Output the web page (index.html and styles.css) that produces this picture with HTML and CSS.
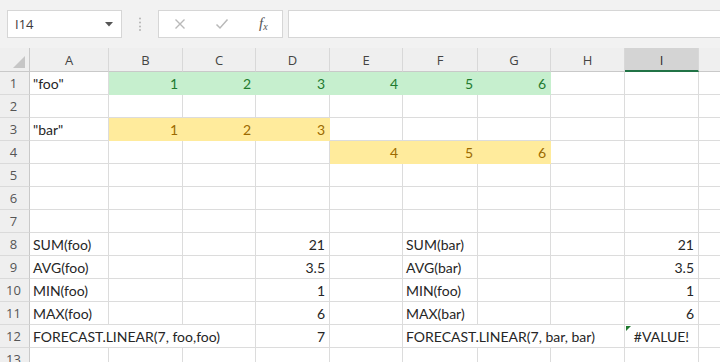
FILE: index.html
```html
<!DOCTYPE html>
<html>
<head>
<meta charset="utf-8">
<link rel="stylesheet" href="styles.css">
</head>
<body>
<div class="app">
  <div class="toolbar">
    <div class="namebox">
      <span class="nb-text">I14</span>
      <svg class="nb-arrow" width="8" height="5" viewBox="0 0 8 5"><polygon points="0,0 8,0 4,4.5" fill="#555"/></svg>
    </div>
    <div class="grip">
      <svg width="4" height="14" viewBox="0 0 4 14"><circle cx="2" cy="1.5" r="1" fill="#b5b5b5"/><circle cx="2" cy="5.5" r="1" fill="#b5b5b5"/><circle cx="2" cy="9.5" r="1" fill="#b5b5b5"/><circle cx="2" cy="13" r="1" fill="#b5b5b5"/></svg>
    </div>
    <div class="fbtns">
      <svg class="ico" width="12" height="12" viewBox="0 0 12 12"><path d="M1.5 1.5 L10.5 10.5 M10.5 1.5 L1.5 10.5" stroke="#b9b9b9" stroke-width="1.4" fill="none"/></svg>
      <svg class="ico" width="14" height="12" viewBox="0 0 14 12"><path d="M1.5 6.5 L5 10 L12.5 1.5" stroke="#b9b9b9" stroke-width="1.5" fill="none"/></svg>
      <span class="fx">f<span class="fx-sub">x</span></span>
    </div>
    <div class="formula"></div>
  </div>

  <div class="sheet">
    <div class="row hdr">
      <div class="corner"><svg width="12" height="12" viewBox="0 0 12 12"><polygon points="12,0 12,12 0,12" fill="#c6c6c6"/></svg></div>
      <div class="ch">A</div><div class="ch">B</div><div class="ch">C</div><div class="ch">D</div><div class="ch">E</div><div class="ch">F</div><div class="ch">G</div><div class="ch">H</div><div class="ch sel">I</div><div class="ch"></div>
    </div>

    <div class="row">
      <div class="rh">1</div>
      <div class="c">"foo"</div>
      <div class="c num good">1</div><div class="c num good">2</div><div class="c num good">3</div><div class="c num good">4</div><div class="c num good">5</div><div class="c num good">6</div>
      <div class="c"></div><div class="c"></div><div class="c"></div>
    </div>

    <div class="row">
      <div class="rh">2</div>
      <div class="c"></div><div class="c"></div><div class="c"></div><div class="c"></div><div class="c"></div><div class="c"></div><div class="c"></div><div class="c"></div><div class="c"></div><div class="c"></div>
    </div>

    <div class="row">
      <div class="rh">3</div>
      <div class="c">"bar"</div>
      <div class="c num neutral">1</div><div class="c num neutral">2</div><div class="c num neutral">3</div>
      <div class="c"></div><div class="c"></div><div class="c"></div><div class="c"></div><div class="c"></div><div class="c"></div>
    </div>

    <div class="row">
      <div class="rh">4</div>
      <div class="c"></div><div class="c"></div><div class="c"></div><div class="c"></div>
      <div class="c num neutral">4</div><div class="c num neutral">5</div><div class="c num neutral">6</div>
      <div class="c"></div><div class="c"></div><div class="c"></div>
    </div>

    <div class="row">
      <div class="rh">5</div>
      <div class="c"></div><div class="c"></div><div class="c"></div><div class="c"></div><div class="c"></div><div class="c"></div><div class="c"></div><div class="c"></div><div class="c"></div><div class="c"></div>
    </div>

    <div class="row">
      <div class="rh">6</div>
      <div class="c"></div><div class="c"></div><div class="c"></div><div class="c"></div><div class="c"></div><div class="c"></div><div class="c"></div><div class="c"></div><div class="c"></div><div class="c"></div>
    </div>

    <div class="row">
      <div class="rh">7</div>
      <div class="c"></div><div class="c"></div><div class="c"></div><div class="c"></div><div class="c"></div><div class="c"></div><div class="c"></div><div class="c"></div><div class="c"></div><div class="c"></div>
    </div>

    <div class="row">
      <div class="rh">8</div>
      <div class="c">SUM(foo)</div><div class="c"></div><div class="c"></div><div class="c num">21</div>
      <div class="c"></div><div class="c">SUM(bar)</div><div class="c"></div><div class="c"></div><div class="c num">21</div><div class="c"></div>
    </div>

    <div class="row">
      <div class="rh">9</div>
      <div class="c">AVG(foo)</div><div class="c"></div><div class="c"></div><div class="c num">3.5</div>
      <div class="c"></div><div class="c">AVG(bar)</div><div class="c"></div><div class="c"></div><div class="c num">3.5</div><div class="c"></div>
    </div>

    <div class="row">
      <div class="rh">10</div>
      <div class="c">MIN(foo)</div><div class="c"></div><div class="c"></div><div class="c num">1</div>
      <div class="c"></div><div class="c">MIN(foo)</div><div class="c"></div><div class="c"></div><div class="c num">1</div><div class="c"></div>
    </div>

    <div class="row">
      <div class="rh">11</div>
      <div class="c">MAX(foo)</div><div class="c"></div><div class="c"></div><div class="c num">6</div>
      <div class="c"></div><div class="c">MAX(bar)</div><div class="c"></div><div class="c"></div><div class="c num">6</div><div class="c"></div>
    </div>

    <div class="row">
      <div class="rh">12</div>
      <div class="c span3">FORECAST.LINEAR(7, foo,foo)</div><div class="c num">7</div>
      <div class="c"></div><div class="c span3">FORECAST.LINEAR(7, bar, bar)</div><div class="c err">#VALUE!<span class="flag"></span></div><div class="c"></div>
    </div>

    <div class="row">
      <div class="rh">13</div>
      <div class="c"></div><div class="c"></div><div class="c"></div><div class="c"></div><div class="c"></div><div class="c"></div><div class="c"></div><div class="c"></div><div class="c"></div><div class="c"></div>
    </div>
  </div>
</div>
</body>
</html>
```

FILE: styles.css
```css
html, body {
  margin: 0;
  padding: 0;
  width: 720px;
  height: 362px;
  overflow: hidden;
  background: #ffffff;
}

.app {
  width: 720px;
  height: 362px;
  overflow: hidden;
  font-family: Lato, "Open Sans", sans-serif;
}

/* ---------- toolbar / formula bar ---------- */
.toolbar {
  height: 48px;
  box-sizing: border-box;
  padding: 10px 0 10px 7px;
  background: #f2f2f2;
  display: flex;
  align-items: stretch;
}

.namebox {
  width: 115px;
  box-sizing: border-box;
  background: #fff;
  border: 1px solid #d6d6d6;
  display: flex;
  align-items: center;
  justify-content: space-between;
  padding: 0 8px 0 7px;
}

.nb-text {
  font-family: "Open Sans", sans-serif;
  font-size: 13px;
  color: #3a3a3a;
}

.grip {
  width: 36px;
  display: flex;
  align-items: center;
  justify-content: center;
}

.fbtns {
  width: 125px;
  box-sizing: border-box;
  background: #fff;
  border: 1px solid #d6d6d6;
  display: flex;
  align-items: center;
  padding: 0 0 0 15px;
  gap: 0;
}

.fbtns .ico:first-child {
  margin-right: 29px;
}

.fbtns .ico:nth-child(2) {
  margin-right: 30px;
}

.fx {
  font-family: "Liberation Serif", serif;
  font-style: italic;
  font-size: 15px;
  color: #555;
  line-height: 1;
  margin-top: -2px;
}

.fx-sub {
  font-size: 10px;
  position: relative;
  top: 2px;
}

.formula {
  flex: 1;
  margin-left: 5px;
  background: #fff;
  border: 1px solid #d6d6d6;
  border-right: none;
}

/* ---------- sheet ---------- */
.sheet {
  width: 720px;
  overflow: hidden;
}

.row {
  display: grid;
  grid-template-columns: 30px 79px 74px 73px 74px 73px 75px 73px 74px 74px 74px;
  height: 23px;
  width: 773px;
}

.row.hdr {
  height: 24px;
}

.corner {
  background: #efefef;
  border-right: 1px solid #c9c9c9;
  border-bottom: 1px solid #c9c9c9;
  box-sizing: border-box;
  display: flex;
  align-items: flex-end;
  justify-content: flex-end;
  padding: 0 4px 3px 0;
}

.ch {
  background: #efefef;
  box-sizing: border-box;
  border-right: 1px solid #d8d8d8;
  border-bottom: 1px solid #c9c9c9;
  display: flex;
  align-items: center;
  justify-content: center;
  font-family: "Open Sans", sans-serif;
  font-size: 13px;
  color: #444;
  padding-top: 1px;
}

.ch.sel {
  background: #d4d4d4;
  border-bottom: 2px solid #217346;
  color: #2a2a2a;
}

.rh {
  background: #efefef;
  box-sizing: border-box;
  border-right: 1px solid #c9c9c9;
  border-bottom: 1px solid #dadada;
  display: flex;
  align-items: flex-end;
  justify-content: center;
  padding: 0 2px 2px 0;
  font-family: "Open Sans", sans-serif;
  font-size: 13px;
  color: #555;
  line-height: 18px;
}

.c {
  box-sizing: border-box;
  border-right: 1px solid #dcdcdc;
  border-bottom: 1px solid #dcdcdc;
  display: flex;
  align-items: flex-end;
  padding: 0 3px 1px 3px;
  font-size: 14px;
  line-height: 18px;
  color: #262626;
  white-space: nowrap;
  position: relative;
}

.c.num {
  justify-content: flex-end;
  padding-right: 4px;
}

.c.span3 {
  grid-column: span 3;
  overflow: visible;
}

.c.good {
  background: #c6efce;
  border-color: #c6efce;
  color: #1f7a2e;
}

.c.neutral {
  background: #ffeb9c;
  border-color: #ffeb9c;
  color: #9c6a00;
}

.c.err {
  justify-content: center;
}

.flag {
  position: absolute;
  left: 1px;
  top: 1px;
  width: 0;
  height: 0;
  border-top: 5px solid #1f7a2e;
  border-right: 5px solid transparent;
}
```
